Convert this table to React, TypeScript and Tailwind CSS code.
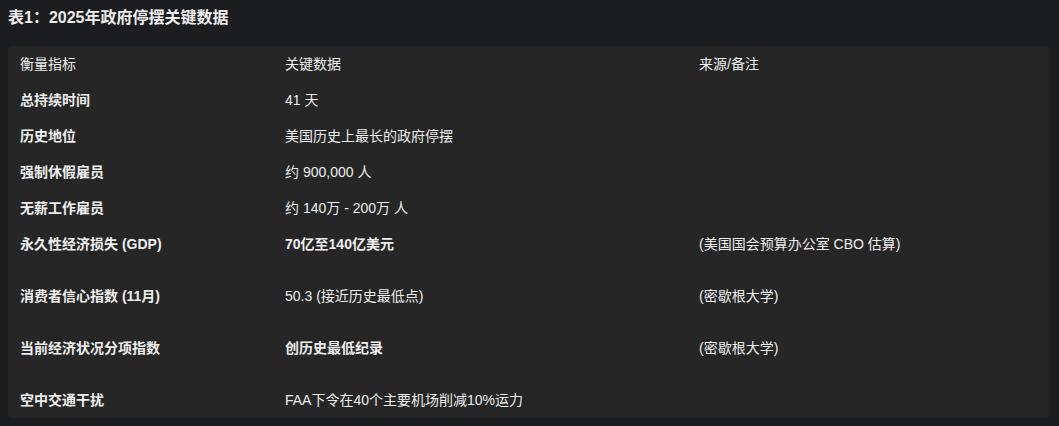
const rows: { k: string; v: string; vb?: boolean; n?: string }[] = [
  { k: "总持续时间", v: "41 天" },
  { k: "历史地位", v: "美国历史上最长的政府停摆" },
  { k: "强制休假雇员", v: "约 900,000 人" },
  { k: "无薪工作雇员", v: "约 140万 - 200万 人" },
  { k: "永久性经济损失 (GDP)", v: "70亿至140亿美元", vb: true, n: "(美国国会预算办公室 CBO 估算)" },
  { k: "消费者信心指数 (11月)", v: "50.3 (接近历史最低点)", n: "(密歇根大学)" },
  { k: "当前经济状况分项指数", v: "创历史最低纪录", vb: true, n: "(密歇根大学)" },
  { k: "空中交通干扰", v: "FAA下令在40个主要机场削减10%运力" },
];

export default function App() {
  return (
    <div
      className="w-[1059px] h-[426px] bg-[#1c1d1f] text-[#ededed] px-2 pt-[7px] overflow-hidden"
      style={{ fontFamily: '"Liberation Sans", "Noto Sans CJK SC", sans-serif' }}
    >
      <h2 className="text-[16px] font-bold leading-[22px] mb-[17px]">表1：2025年政府停摆关键数据</h2>
      <div className="bg-[#262626] rounded-[4px] w-[1041px]">
        <table className="w-full table-fixed text-[14px] leading-[20px]">
          <colgroup>
            <col className="w-[265px]" />
            <col className="w-[414px]" />
            <col />
          </colgroup>
          <thead>
            <tr className="h-9">
              <th className="text-left font-normal px-3 align-middle">衡量指标</th>
              <th className="text-left font-normal px-3 align-middle">关键数据</th>
              <th className="text-left font-normal px-3 align-middle">来源/备注</th>
            </tr>
          </thead>
          <tbody>
            {rows.map((r) => (
              <tr key={r.k} className={r.n ? "h-[52px]" : "h-9"}>
                <td className="px-3 pt-2 align-top font-bold">{r.k}</td>
                <td className={"px-3 pt-2 align-top " + (r.vb ? "font-bold" : "")}>{r.v}</td>
                <td className="px-3 pt-2 align-top">{r.n}</td>
              </tr>
            ))}
          </tbody>
        </table>
      </div>
    </div>
  );
}
